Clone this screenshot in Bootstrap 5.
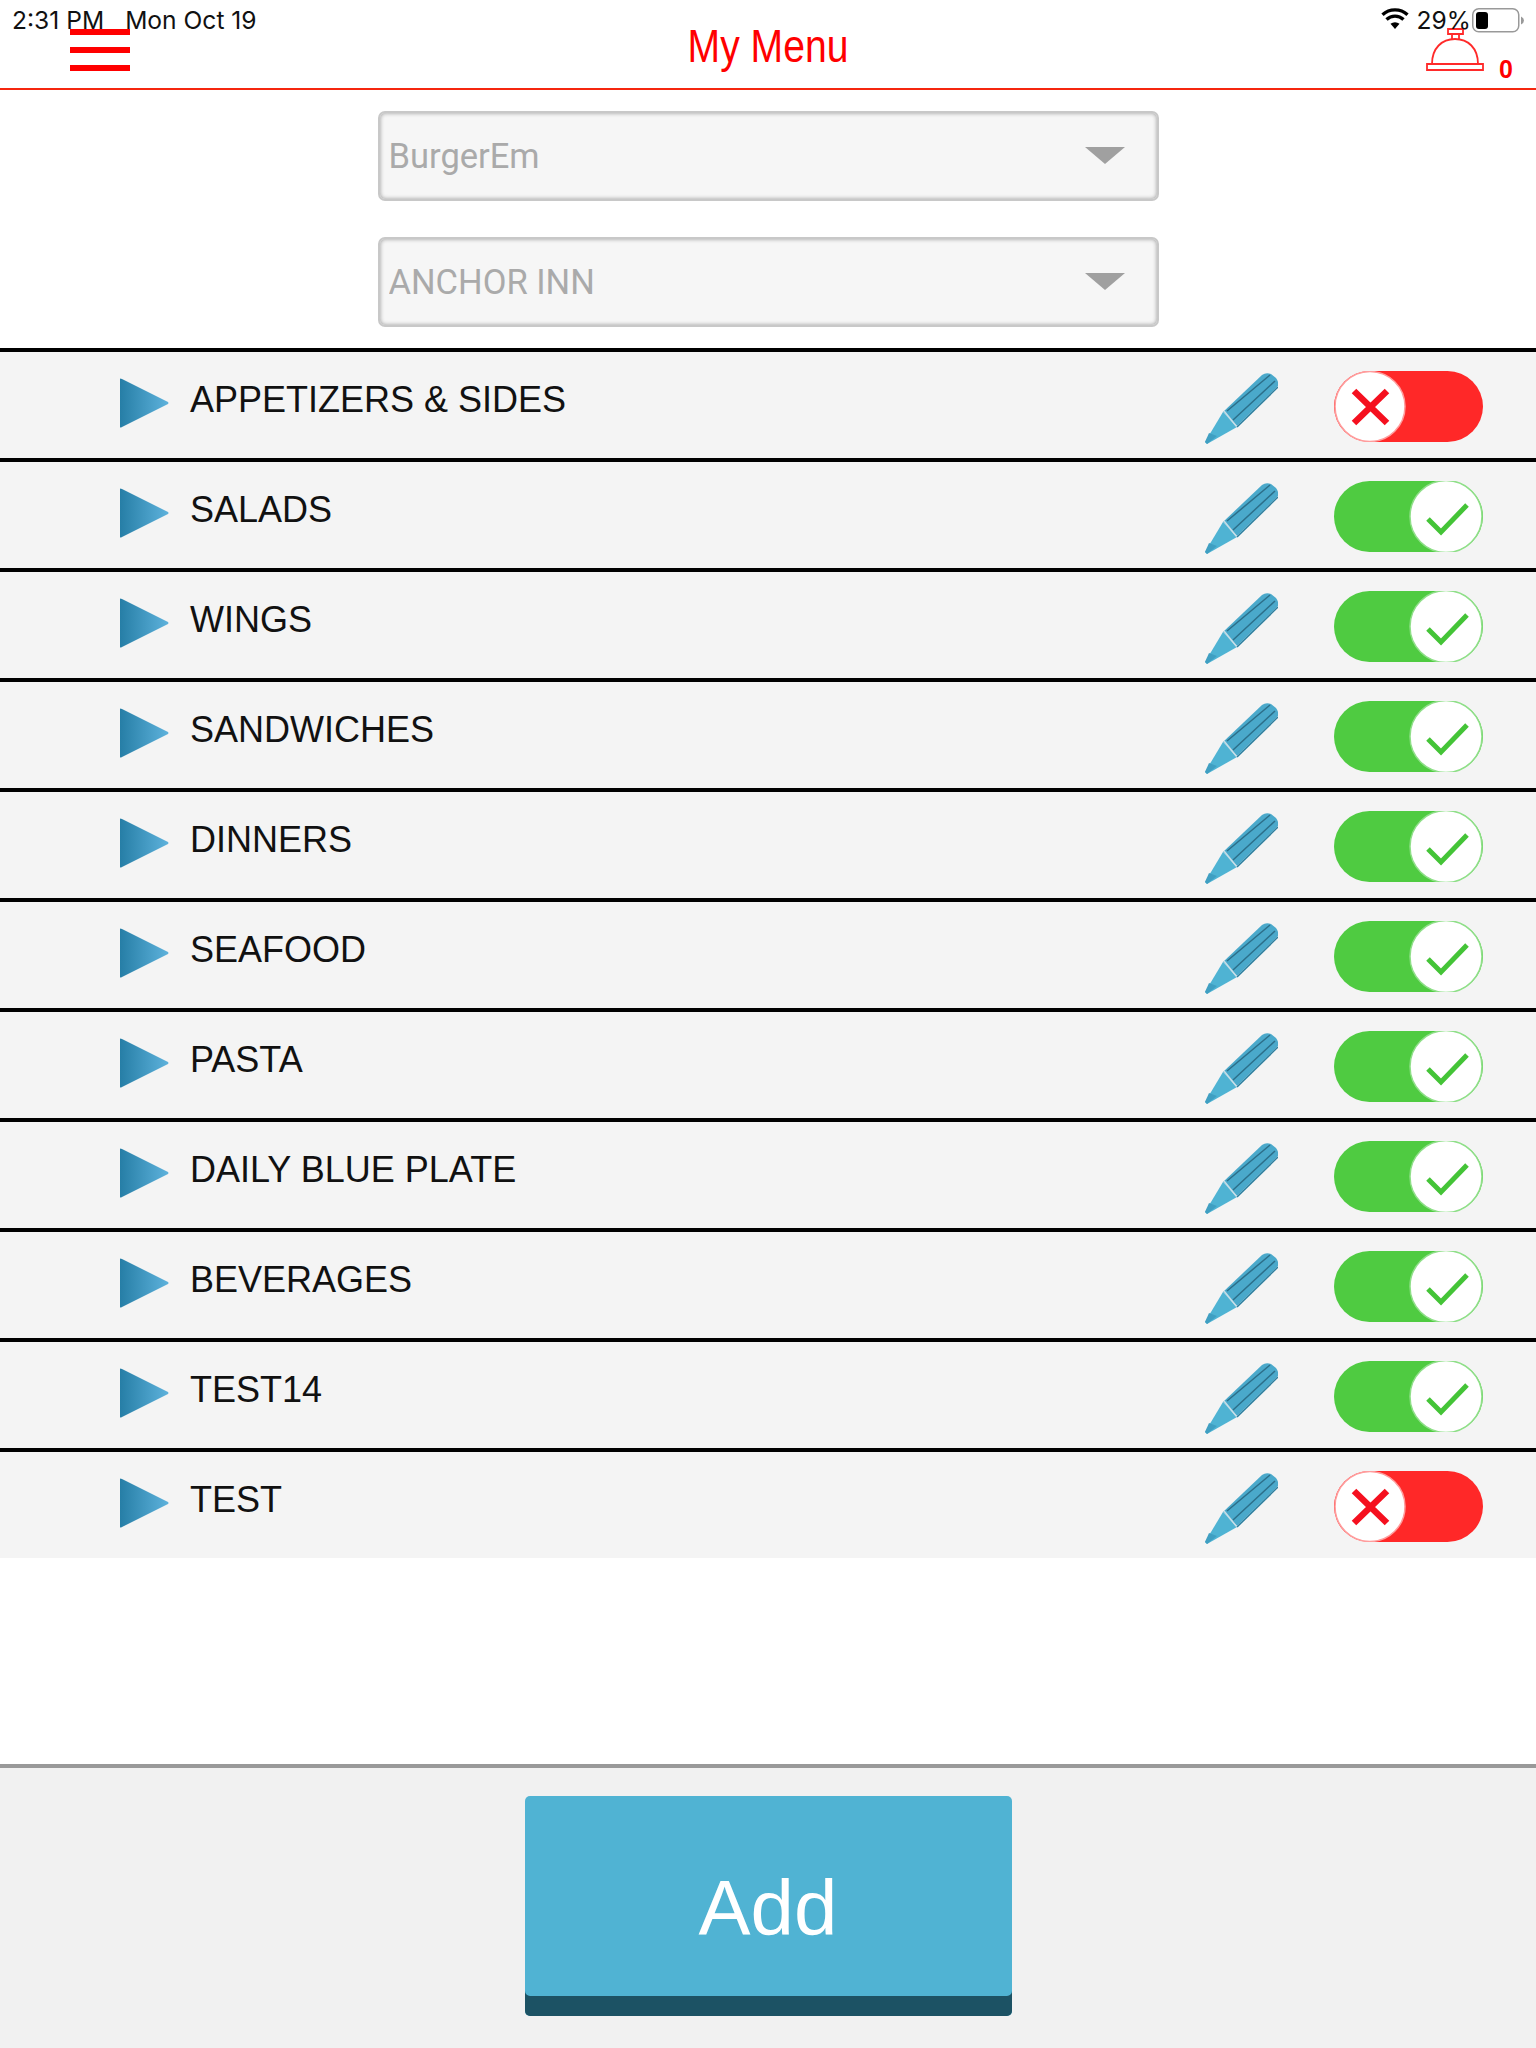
<!doctype html>
<html lang="en">
<head>
    <meta charset="utf-8" />
    <meta name="viewport" content="width=device-width, initial-scale=1" />
    <title>My Menu</title>
    <link href="https://cdn.jsdelivr.net/npm/bootstrap@5.3.0/dist/css/bootstrap.min.css" rel="stylesheet" />
    <style>
        body { height: 2048px; font-family: "Liberation Sans", Arial, sans-serif; background: #fff; }
        .page-head { height: 90px; border-bottom: 2px solid #f5260f; }
        .status-bar { top: 0; left: 0; right: 0; height: 36px; padding: 4px 11px 0 12px; font: 400 24.600px/32px Inter, sans-serif; color: #111; }
        .status-date { margin-left: 21px; }
        .status-wifi { width: 28px; height: 21px; margin-right: 8px; }
        .status-batt { width: 53px; height: 25px; margin: 4px 0 0 1px; }
        .burger { width: 60px; margin-left: 70px; padding-top: 29px; }
        .burger span { display: block; height: 6px; margin-bottom: 12px; background: #ff0000; }
        .head-title { left: 0; right: 0; top: 18px; color: #ff0000; font: 400 46px/56px "Liberation Sans", sans-serif; text-align: center; transform: scaleX(.85); }
        .bell-wrap { top: 28px; left: 1426px; }
        .bell-count { top: 54px; left: 1499px; color: #ff0000; font: 700 25px/30px "Liberation Sans", sans-serif; }
        .picker-stack { padding: 21px 0; gap: 36px; }
        .picker { width: 781px; height: 90px; padding: 0 80px 0 9px; font: 400 34.500px/normal Roboto, sans-serif; color: #aaa; background-color: #f6f6f6; border: 2px solid #c8c8c8; border-radius: 7px; box-shadow: inset 0 0 4px #999; background-size: 40px 20px; background-position: right 32px center; background-image: url("data:image/svg+xml,%3Csvg xmlns='http://www.w3.org/2000/svg' viewBox='0 0 40 20'%3E%3Cpath d='M0 1h40L20 18z' fill='%23a0a0a0'/%3E%3C/svg%3E"); }
        .list-group-flush > .cat-row { height: 110px; padding: 0 53px 0 120px; background: #f4f4f4; border-width: 4px 0 0; border-style: solid; border-color: #000; border-radius: 0; }
        .cat-arrow { width: 49px; height: 50px; margin: -5px 21px 0 0; flex: none; }
        .cat-name { font-size: 36px; line-height: 44px; color: #111; margin-bottom: 11px; }
        .cat-pencil { width: 73px; height: 71px; margin: 7px 56px 0 auto; }
        .cat-switch { width: 149px; height: 71px; margin-top: 3px; }
        .foot-bar { height: 284px; padding-top: 28px; background: #f1f1f1; border-top: 4px solid #999; }
        .add-btn { width: 487px; height: 220px; padding: 4px 0 0; font-size: 78px; font-weight: 400; color: #fff; background: #50b3d3; border: 0; border-radius: 5px; box-shadow: inset 0 -20px 0 #1c5264; }
    </style>
</head>
<body class="d-flex flex-column">
<svg width="0" height="0" class="position-absolute">
    <defs>
        <linearGradient id="arrowFill" x1="0" x2="1" y1="0" y2="0">
            <stop offset="0" stop-color="#267ea6" />
            <stop offset="1" stop-color="#5eb2dc" />
        </linearGradient>
        <symbol id="iconArrow" viewBox="0 0 49 50">
            <path d="M0 1Q0 0 2 1L48 24Q49 25 48 26L2 49Q0 50 0 49z" fill="url(#arrowFill)" />
        </symbol>
        <symbol id="iconPencil" viewBox="0 0 73 71">
            <path d="M18 39L57 2Q61-1 66 1L71 5Q74 9 73 13L32 53z" fill="#4aa9cb" />
            <path d="M18 39L32 54L2 71L0 69z" fill="#4fb3d3" />
            <path d="M4 60L12 63L2 71L0 69z" fill="#3f9fc2" />
            <path d="M22 38L65 2M28 47L70 8" stroke="#2c6f8a" stroke-width="1.500" fill="none" />
            <path d="M19 38L32 54" stroke="#c9dfe8" stroke-width="1.500" fill="none" />
            <path d="M32 54L73 14" stroke="#2d7f9f" stroke-width="1.500" fill="none" />
        </symbol>
        <symbol id="iconOff" viewBox="0 0 149 71">
            <rect width="149" height="71" rx="35.500" fill="#ff2828" />
            <circle cx="36" cy="35.500" r="35" fill="#fff" stroke="#ff9d9d" stroke-width="1.500" />
            <path d="M20 20L53 52M53 20L20 52" stroke="#f5101f" stroke-width="6.500" />
        </symbol>
        <symbol id="iconOn" viewBox="0 0 149 71">
            <rect width="149" height="71" rx="35.500" fill="#4fcb41" />
            <circle cx="112" cy="35.500" r="36" fill="#fff" stroke="#8fdf88" stroke-width="1.500" />
            <path d="M94 38L107 51L133 24" stroke="#44c437" stroke-width="5" fill="none" />
        </symbol>
    </defs>
</svg>

<!-- Header -->
<header class="page-head position-relative flex-shrink-0">
    <div class="burger"><span></span><span></span><span></span></div>
    <div class="head-title position-absolute">My Menu</div>
    <svg class="bell-wrap position-absolute" width="58" height="44" viewBox="0 0 58 44" fill="none" stroke="#ff2a2a" stroke-width="1.800">
        <path d="M22 1h15v5h-15zM26 6v5M33 6v5" />
        <path d="M6 36C6 20 16 11 29 11S52 20 52 36" />
        <path d="M1 36h56v6h-56z" />
    </svg>
    <div class="bell-count position-absolute">0</div>
    <div class="status-bar position-absolute d-flex align-items-start">
        <span>2:31 PM</span>
        <span class="status-date">Mon Oct 19</span>
        <svg class="status-wifi ms-auto mt-1" viewBox="0 0 28 21">
            <path d="M14 21L9.500 15.800A7 7 0 0 1 18.500 15.800z" fill="#000" />
            <path d="M5.500 11.500A12.500 12.500 0 0 1 22.500 11.500M1.500 6.700A18.500 18.500 0 0 1 26.500 6.700" stroke="#000" stroke-width="3.400" fill="none" />
        </svg>
        <span>29%</span>
        <svg class="status-batt" viewBox="0 0 53 25">
            <rect x="0.750" y="0.750" width="46" height="23" rx="6" fill="none" stroke="#999" stroke-width="1.500" />
            <rect x="4" y="4" width="12" height="17" rx="3" fill="#000" />
            <path d="M49 8.500Q52 10 52 12.500T49 16.500z" fill="#999" />
        </svg>
    </div>
</header>

<!-- Pickers -->
<div class="picker-stack d-flex flex-column align-items-center flex-shrink-0">
    <select class="form-select picker"><option>BurgerEm</option></select>
    <select class="form-select picker"><option>ANCHOR INN</option></select>
</div>

<!-- Categories -->
<div class="list-group list-group-flush flex-shrink-0">
    <div class="list-group-item cat-row d-flex align-items-center"><svg class="cat-arrow"><use href="#iconArrow" /></svg><span class="cat-name">APPETIZERS &amp; SIDES</span><svg class="cat-pencil"><use href="#iconPencil" /></svg><svg class="cat-switch"><use href="#iconOff" /></svg></div>
    <div class="list-group-item cat-row d-flex align-items-center"><svg class="cat-arrow"><use href="#iconArrow" /></svg><span class="cat-name">SALADS</span><svg class="cat-pencil"><use href="#iconPencil" /></svg><svg class="cat-switch"><use href="#iconOn" /></svg></div>
    <div class="list-group-item cat-row d-flex align-items-center"><svg class="cat-arrow"><use href="#iconArrow" /></svg><span class="cat-name">WINGS</span><svg class="cat-pencil"><use href="#iconPencil" /></svg><svg class="cat-switch"><use href="#iconOn" /></svg></div>
    <div class="list-group-item cat-row d-flex align-items-center"><svg class="cat-arrow"><use href="#iconArrow" /></svg><span class="cat-name">SANDWICHES</span><svg class="cat-pencil"><use href="#iconPencil" /></svg><svg class="cat-switch"><use href="#iconOn" /></svg></div>
    <div class="list-group-item cat-row d-flex align-items-center"><svg class="cat-arrow"><use href="#iconArrow" /></svg><span class="cat-name">DINNERS</span><svg class="cat-pencil"><use href="#iconPencil" /></svg><svg class="cat-switch"><use href="#iconOn" /></svg></div>
    <div class="list-group-item cat-row d-flex align-items-center"><svg class="cat-arrow"><use href="#iconArrow" /></svg><span class="cat-name">SEAFOOD</span><svg class="cat-pencil"><use href="#iconPencil" /></svg><svg class="cat-switch"><use href="#iconOn" /></svg></div>
    <div class="list-group-item cat-row d-flex align-items-center"><svg class="cat-arrow"><use href="#iconArrow" /></svg><span class="cat-name">PASTA</span><svg class="cat-pencil"><use href="#iconPencil" /></svg><svg class="cat-switch"><use href="#iconOn" /></svg></div>
    <div class="list-group-item cat-row d-flex align-items-center"><svg class="cat-arrow"><use href="#iconArrow" /></svg><span class="cat-name">DAILY BLUE PLATE</span><svg class="cat-pencil"><use href="#iconPencil" /></svg><svg class="cat-switch"><use href="#iconOn" /></svg></div>
    <div class="list-group-item cat-row d-flex align-items-center"><svg class="cat-arrow"><use href="#iconArrow" /></svg><span class="cat-name">BEVERAGES</span><svg class="cat-pencil"><use href="#iconPencil" /></svg><svg class="cat-switch"><use href="#iconOn" /></svg></div>
    <div class="list-group-item cat-row d-flex align-items-center"><svg class="cat-arrow"><use href="#iconArrow" /></svg><span class="cat-name">TEST14</span><svg class="cat-pencil"><use href="#iconPencil" /></svg><svg class="cat-switch"><use href="#iconOn" /></svg></div>
    <div class="list-group-item cat-row d-flex align-items-center"><svg class="cat-arrow"><use href="#iconArrow" /></svg><span class="cat-name">TEST</span><svg class="cat-pencil"><use href="#iconPencil" /></svg><svg class="cat-switch"><use href="#iconOff" /></svg></div>
</div>

<!-- Footer -->
<footer class="foot-bar mt-auto d-flex justify-content-center align-items-start">
    <button type="button" class="btn add-btn">Add</button>
</footer>

<script src="https://cdn.jsdelivr.net/npm/bootstrap@5.3.0/dist/js/bootstrap.bundle.min.js"></script>
</body>
</html>
